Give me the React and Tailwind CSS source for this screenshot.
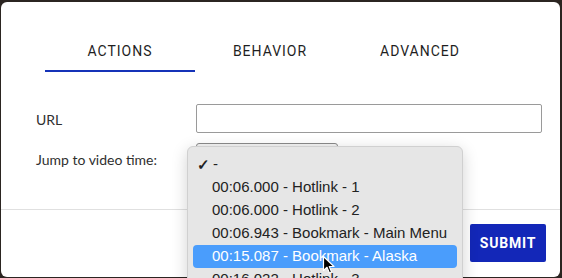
export default function App() {
  const items = [
    "00:06.000 - Hotlink - 1",
    "00:06.000 - Hotlink - 2",
    "00:06.943 - Bookmark - Main Menu",
    "00:15.087 - Bookmark - Alaska",
    "00:16.022 - Hotlink - 3",
  ];
  return (
    <div className="relative w-[562px] h-[278px] overflow-hidden bg-[#2b2521] pt-[2px] pl-[1px]">
      <div className="w-[559px] h-[275px] rounded-[6px] bg-white flex flex-col">
        <div className="ml-[44px] w-[450px] grid grid-cols-3 text-[14px] tracking-[0.07em] text-[#1f1f1f] [font-family:Roboto,'Liberation_Sans',sans-serif]">
          <div className="pt-[39px] pb-[9px] leading-[20px] text-center border-b-2 border-[#1533b8]">ACTIONS</div>
          <div className="pt-[39px] pb-[11px] leading-[20px] text-center">BEHAVIOR</div>
          <div className="pt-[39px] pb-[11px] leading-[20px] text-center">ADVANCED</div>
        </div>
        <div className="[font-family:Lato,'Liberation_Sans',sans-serif] text-[14px] text-[#2f2f2f]">
          <div className="mt-[32px] flex items-center">
            <div className="pl-[35px] w-[195px] pt-[1px]">URL</div>
            <div className="w-[346px] h-[29px] border border-[#9a9a9a] rounded-[2px] bg-white" />
          </div>
          <div className="mt-[10px] flex items-center">
            <div className="pl-[35px] w-[195px] pt-[3px]">Jump to video time:</div>
            <div className="w-[142px] h-[29px] border border-[#8a8a8a] rounded-[3px] bg-[#f4f4f4]" />
          </div>
        </div>
        <div className="mt-[37px] h-px bg-[#e0e0e0]" />
        <div className="flex justify-end pt-[14px] pr-[14px]">
          <div className="w-[76px] h-[38px] rounded-[2px] bg-[#1327b8] text-white font-bold text-[14px] tracking-[0.06em] flex items-center justify-center [font-family:Roboto,'Liberation_Sans',sans-serif]">
            SUBMIT
          </div>
        </div>
      </div>

      <div className="absolute left-[187px] top-[146px] w-[276px] h-[160px] rounded-[6px] bg-[#e6e6e6] border border-[#d0d0d0] shadow-[0_4px_16px_rgba(0,0,0,0.18)] pt-[6px] px-[5px] [font-family:'Liberation_Sans',Arial,sans-serif] text-[15px] text-[#222]">
        <div className="h-[23px] flex items-center">
          <span className="w-[20px] pl-[4px] text-[15px] font-bold leading-none">✓</span>
          <span>-</span>
        </div>
        {items.map((t, i) => (
          <div
            key={i}
            className={
              i === 3
                ? "h-[23px] flex items-center pl-[19px] rounded-[4px] bg-[#4a9dfc] text-white"
                : "h-[23px] flex items-center pl-[19px]"
            }
          >
            {t}
          </div>
        ))}
      </div>

      <svg className="absolute left-[322px] top-[255px]" width="14" height="20" viewBox="0 0 14 20">
        <path d="M1.5 1.5 L1.5 15.5 L5 12.3 L7.4 18 L9.6 17 L7.3 11.5 L12 11.5 Z" fill="#000" stroke="#fff" strokeWidth="1.2" strokeLinejoin="round" />
      </svg>
    </div>
  );
}
